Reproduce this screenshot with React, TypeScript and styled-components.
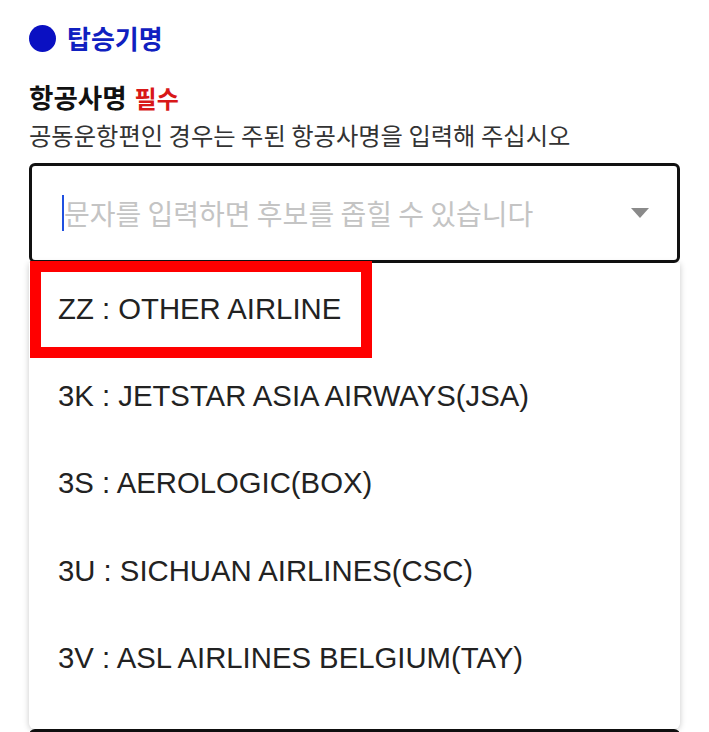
import React from "react"
import styled, { createGlobalStyle } from "styled-components"

const airlines = [
  "ZZ : OTHER AIRLINE",
  "3K : JETSTAR ASIA AIRWAYS(JSA)",
  "3S : AEROLOGIC(BOX)",
  "3U : SICHUAN AIRLINES(CSC)",
  "3V : ASL AIRLINES BELGIUM(TAY)",
]

export default function App() {
  return (
    <>
      <GlobalStyle />
      <Page>
        <SectionTitle>
          <Dot />
          탑승기명
        </SectionTitle>
        <Label>
          항공사명 <Required>필수</Required>
        </Label>
        <Help>공동운항편인 경우는 주된 항공사명을 입력해 주십시오</Help>
        <Combo>
          <InputBox>
            <Caret />
            <Placeholder>문자를 입력하면 후보를 좁힐 수 있습니다</Placeholder>
            <Arrow />
          </InputBox>
          <List>
            {airlines.map((name) => (
              <Item key={name}>{name}</Item>
            ))}
            <Highlight />
          </List>
          <NextField />
        </Combo>
      </Page>
    </>
  )
}

const GlobalStyle = createGlobalStyle`
  html, body {
    margin: 0;
    background: #fff;
    overflow: hidden;
  }
  body {
    font-family: "Noto Sans CJK KR", "Noto Sans", sans-serif;
  }
`

const Page = styled.div`
  width: 709px;
  height: 732px;
  box-sizing: border-box;
  padding: 22px 29px 0 29px;
  overflow: hidden;
`

const SectionTitle = styled.h2`
  display: flex;
  align-items: center;
  gap: 11px;
  margin: 0;
  font-size: 26px;
  font-weight: 700;
  color: #1020c0;
  line-height: 32px;
`

const Dot = styled.span`
  width: 27px;
  height: 27px;
  border-radius: 50%;
  background: #0a10c2;
`

const Label = styled.div`
  margin-top: 26px;
  font-size: 26.5px;
  font-weight: 700;
  color: #111;
  line-height: 34px;
`

const Required = styled.span`
  margin-left: 2px;
  font-size: 24px;
  color: #d81818;
`

const Help = styled.div`
  font-size: 24.3px;
  color: #333;
  line-height: 40px;
`

const Combo = styled.div`
  margin-top: 8px;
  width: 651px;
`

const InputBox = styled.div`
  height: 100px;
  box-sizing: border-box;
  border: 3px solid #111;
  border-radius: 6px;
  display: flex;
  align-items: center;
  padding: 0 28px 0 30px;
  background: #fff;
`

const Caret = styled.span`
  width: 2px;
  height: 36px;
  background: #2050e0;
`

const Placeholder = styled.span`
  flex: 1;
  font-size: 28px;
  color: #c4c4c4;
`

const Arrow = styled.span`
  width: 0;
  height: 0;
  border-left: 9px solid transparent;
  border-right: 9px solid transparent;
  border-top: 10px solid #8a8a8a;
`

const List = styled.ul`
  position: relative;
  z-index: 1;
  margin: 0;
  padding: 2px 0 0;
  list-style: none;
  height: 466px;
  box-sizing: border-box;
  background: #fff;
  border-radius: 0 0 6px 6px;
  box-shadow: 0 1px 6px rgba(0, 0, 0, 0.22);
`

const Item = styled.li`
  height: 87.3px;
  display: flex;
  align-items: center;
  padding-left: 29px;
  font-family: "Liberation Sans", Arial, sans-serif;
  font-size: 29.3px;
  color: #222;
`

const Highlight = styled.span`
  position: absolute;
  left: 1px;
  top: -2px;
  width: 342px;
  height: 97px;
  box-sizing: border-box;
  border: 11px solid #ff0000;
`

const NextField = styled.div`
  height: 20px;
  border: 3px solid #111;
  border-radius: 6px;
`
